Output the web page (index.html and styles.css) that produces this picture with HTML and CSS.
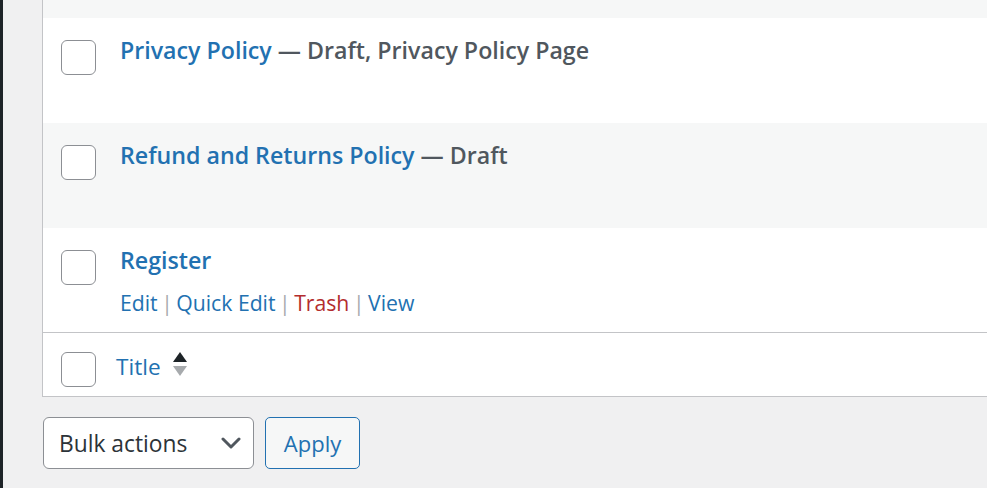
FILE: index.html
```html
<!DOCTYPE html>
<html lang="en">
<head>
<meta charset="utf-8">
<title>Pages</title>
<link rel="stylesheet" href="styles.css">
</head>
<body>
<div class="screen">
  <div class="adminmenu"></div>
  <main class="content">
    <div class="table">
      <div class="row stripe cut"></div>
      <div class="row">
        <div class="cb"><span class="checkbox"></span></div>
        <div class="title-cell">
          <div class="title-line"><a class="row-title">Privacy Policy</a><span class="state"> — Draft, Privacy Policy Page</span></div>
        </div>
      </div>
      <div class="row stripe">
        <div class="cb"><span class="checkbox"></span></div>
        <div class="title-cell">
          <div class="title-line"><a class="row-title">Refund and Returns Policy</a><span class="state"> — Draft</span></div>
        </div>
      </div>
      <div class="row last">
        <div class="cb"><span class="checkbox"></span></div>
        <div class="title-cell">
          <div class="title-line"><a class="row-title">Register</a></div>
          <div class="row-actions">
            <a class="act">Edit</a><span class="sep">|</span><a class="act">Quick Edit</a><span class="sep">|</span><a class="act trash">Trash</a><span class="sep">|</span><a class="act">View</a>
          </div>
        </div>
      </div>
      <div class="foot">
        <div class="cb foot-cb"><span class="checkbox"></span></div>
        <div class="foot-title">
          <a class="col-link">Title</a>
          <span class="sorting">
            <span class="arrow up"></span>
            <span class="arrow down"></span>
          </span>
        </div>
      </div>
    </div>
    <div class="bulk">
      <div class="select">
        <span class="select-text">Bulk actions</span>
        <svg class="chevron" width="20" height="12" viewBox="0 0 20 12"><path d="M2 2 L10 10 L18 2" fill="none" stroke="#50575e" stroke-width="3" stroke-linecap="round" stroke-linejoin="round"/></svg>
      </div>
      <button class="apply">Apply</button>
    </div>
  </main>
</div>
</body>
</html>
```

FILE: styles.css
```css
html, body {
  margin: 0;
  padding: 0;
}
body {
  background: #f0f0f1;
  font-family: "Open Sans", "Noto Sans", sans-serif;
  color: #3c434a;
}
.screen {
  display: flex;
  height: 488px;
  overflow: hidden;
}
.adminmenu {
  width: 3px;
  flex: none;
  background: #1d2327;
}
.content {
  flex: 1;
  padding-left: 39px;
  overflow: hidden;
}
.table {
  margin-right: -20px;
  background: #fff;
  border-left: 1px solid #c3c4c7;
  border-bottom: 1px solid #c3c4c7;
}
.row {
  display: flex;
  height: 105px;
  box-sizing: border-box;
  background: #fff;
}
.row.stripe {
  background: #f6f7f7;
}
.row.cut {
  height: 18px;
}
.row.last {
  height: 104px;
}
.cb {
  width: 77px;
  flex: none;
  padding-left: 18px;
  padding-top: 22px;
  box-sizing: border-box;
}
.checkbox {
  display: block;
  width: 35px;
  height: 35px;
  box-sizing: border-box;
  border: 1px solid #8c8f94;
  border-radius: 6px;
  background: #fff;
}
.title-cell {
  padding-top: 16px;
}
.title-line {
  font-size: 23.2px;
  line-height: 33px;
  font-weight: 600;
  white-space: nowrap;
}
.row-title {
  color: #2271b1;
}
.state {
  color: #50575e;
}
.row-actions {
  margin-top: 11px;
  font-size: 21.2px;
  line-height: 30px;
  white-space: nowrap;
}
.act {
  color: #2271b1;
}
.act.trash {
  color: #b32d2e;
}
.sep {
  color: #a7aaad;
  padding: 0 3.5px;
}
.foot {
  display: flex;
  height: 64px;
  border-top: 1px solid #c3c4c7;
  box-sizing: border-box;
}
.foot-cb {
  padding-top: 19px;
  width: 73px;
}
.foot-title {
  display: flex;
  align-items: center;
  padding-top: 3px;
  gap: 12px;
}
.col-link {
  color: #2271b1;
  font-size: 22.6px;
  line-height: 33px;
}
.sorting {
  display: flex;
  flex-direction: column;
  gap: 4px;
  margin-top: -5px;
}
.arrow {
  width: 0;
  height: 0;
  border-left: 7px solid transparent;
  border-right: 7px solid transparent;
}
.arrow.up {
  border-bottom: 10px solid #1d2327;
}
.arrow.down {
  border-top: 10px solid #a7aaad;
}
.bulk {
  display: flex;
  gap: 11px;
  margin-top: 20px;
  margin-left: 1px;
}
.select {
  width: 211px;
  height: 52px;
  box-sizing: border-box;
  border: 1px solid #8c8f94;
  border-radius: 6px;
  background: #fff;
  display: flex;
  align-items: center;
  justify-content: space-between;
  padding: 0 12px 0 15px;
  font-size: 22.8px;
  color: #2c3338;
}
.chevron {
  display: block;
}
.apply {
  width: 95px;
  height: 52px;
  box-sizing: border-box;
  border: 1px solid #2271b1;
  border-radius: 5px;
  background: #f6f7f7;
  color: #2271b1;
  font-family: inherit;
  font-size: 22px;
  padding: 0;
}
```
